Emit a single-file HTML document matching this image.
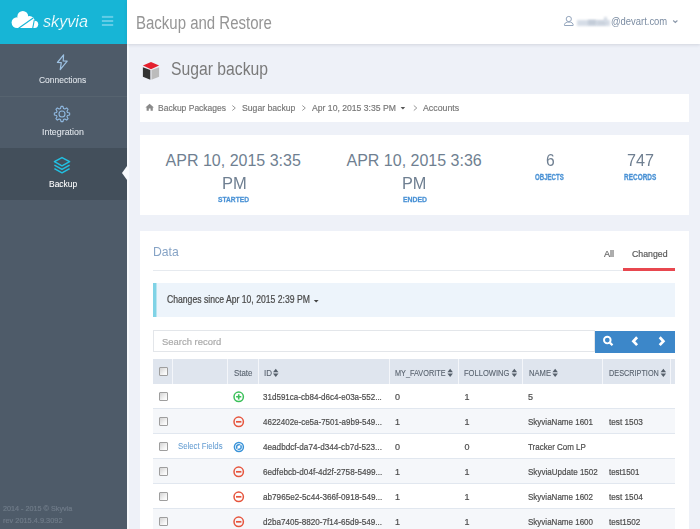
<!DOCTYPE html>
<html><head><meta charset="utf-8">
<style>
*{box-sizing:border-box}
html,body{margin:0;padding:0}
body{width:700px;height:529px;overflow:hidden;position:relative;background:#eef1f8;font-family:"Liberation Sans",sans-serif}
.a{position:absolute}
.t{position:absolute;white-space:nowrap;line-height:1;transform-origin:0 0;font-family:"Liberation Sans",sans-serif}
.s{-webkit-text-stroke:0.2px currentColor}
svg{position:absolute;overflow:visible}
</style></head><body>
<!-- header bar -->
<!-- sidebar -->
<div class=a style="left:0;top:0;width:127px;height:529px;background:#4e5b69"></div>
<div class=a style="left:0;top:0;width:127px;height:44px;background:#17b5d6"></div>
<div class=a style="left:0;top:96px;width:127px;height:1px;background:#56636f"></div>
<div class=a style="left:0;top:148px;width:127px;height:52px;background:#434f5b"></div>
<div class=a style="left:127px;top:44px;width:2px;height:485px;background:#f7f9fc"></div>
<div class=a style="left:127px;top:0;width:573px;height:44px;background:#fff;box-shadow:0 1px 3px rgba(60,70,90,.16)"></div>
<svg style="left:0;top:0" width="130" height="200">
  <polygon points="127,166 122,173 127,180" fill="#f7f9fc"/>
</svg>
<!-- logo -->
<svg style="left:0;top:0" width="127" height="44">
  <g fill="#fff">
    <circle cx="22.8" cy="16.3" r="5.4"/>
    <circle cx="17" cy="22.6" r="5.4"/>
    <circle cx="29.5" cy="21.3" r="5.2"/>
    <circle cx="34.6" cy="24.3" r="3.6"/>
    <rect x="17" y="20" width="17.6" height="8"/>
  </g>
  <g stroke="#17b5d6" stroke-width="1.1" fill="none">
    <line x1="18.6" y1="28.3" x2="33.2" y2="18.0"/>
    <line x1="32.7" y1="28.3" x2="34.3" y2="20.0"/>
  </g>
  <g fill="#62cce6">
    <rect x="101.9" y="15.9" width="11.3" height="2"/>
    <rect x="101.9" y="20" width="11.3" height="2"/>
    <rect x="101.9" y="24" width="11.3" height="2"/>
  </g>
</svg>
<!-- sidebar icons -->
<svg style="left:0;top:0" width="127" height="200">
  <path d="M63.6,54.8 L57.4,62.5 L61.3,62.6 L60.2,69.6 L67.2,61.2 L63.2,61 Z" fill="none" stroke="#9dc1e2" stroke-width="1.2" stroke-linejoin="round"/>
  <g fill="none" stroke="#8fb8e0" stroke-width="1.1">
    <path d="M61.03,106.36 L62.97,106.36 L63.50,108.50 L64.82,109.05 L66.72,107.92 L68.08,109.28 L66.95,111.18 L67.50,112.50 L69.64,113.03 L69.64,114.97 L67.50,115.50 L66.95,116.82 L68.08,118.72 L66.72,120.08 L64.82,118.95 L63.50,119.50 L62.97,121.64 L61.03,121.64 L60.50,119.50 L59.18,118.95 L57.28,120.08 L55.92,118.72 L57.05,116.82 L56.50,115.50 L54.36,114.97 L54.36,113.03 L56.50,112.50 L57.05,111.18 L55.92,109.28 L57.28,107.92 L59.18,109.05 L60.50,108.50 Z" stroke-linejoin="round"/>
    <circle cx="62" cy="114" r="3"/>
  </g>
  <g fill="none" stroke="#22c0e2" stroke-width="1.5" stroke-linejoin="round">
    <path d="M62,157.6 L69.6,161.7 L62,165.8 L54.4,161.7 Z"/>
    <path d="M54.4,165.2 L62,169.4 L69.6,165.2"/>
    <path d="M54.4,168.7 L62,172.8 L69.6,168.7"/>
  </g>
</svg>
<!-- header right -->
<svg style="left:0;top:0" width="700" height="44">
  <g fill="none" stroke="#8ea0b8" stroke-width="0.95">
    <circle cx="568.8" cy="19" r="2.6"/>
    <path d="M564.5,25.5 L564.5,24.3 Q565,22.6 567.2,22.1 L570.4,22.1 Q572.6,22.6 573.1,24.3 L573.1,25.5 Z"/>
    <path d="M673.2,20.5 L675.3,22.5 L677.4,20.5" stroke="#8a98aa" stroke-width="1.1"/>
  </g>
</svg>
<div class=a style="left:576.5px;top:19.5px;width:33px;height:6px;background:#d6dde7;filter:blur(1px)"></div>
<div class=a style="left:588px;top:20px;width:8px;height:5px;background:#c3ccd8;filter:blur(1px)"></div>
<div class=a style="left:597px;top:21px;width:9px;height:4px;background:#cbd3de;filter:blur(1px)"></div>
<div class=a style="left:604px;top:16.5px;width:3px;height:5px;background:#d3dae4;filter:blur(0.8px)"></div>
<!-- title cube -->
<svg style="left:0;top:0" width="200" height="100">
  <polygon points="151,61.9 159.1,65.6 151,69.2 142.9,65.6" fill="#e4202e"/>
  <polygon points="142.9,67.3 150.3,70 150.3,79.8 142.9,76.7" fill="#333"/>
  <polygon points="151.5,70 159.1,67.3 159.1,76.7 151.5,79.8" fill="#bcbcbc"/>
</svg>
<!-- breadcrumb box -->
<div class=a style="left:140px;top:94px;width:549px;height:28px;background:#fff"></div>
<svg style="left:0;top:0" width="700" height="130">
  <path d="M149.6,103.8 L145.4,107.6 L146.6,107.6 L146.6,110.8 L148.8,110.8 L148.8,108.6 L150.6,108.6 L150.6,110.8 L152.8,110.8 L152.8,107.6 L153.9,107.6 Z" fill="#8a8a8a"/>
  <g fill="none" stroke="#9a9a9a" stroke-width="1">
    <path d="M232.3,105.5 L235.3,108 L232.3,110.5"/>
    <path d="M302.3,105.5 L305.3,108 L302.3,110.5"/>
    <path d="M413.8,105.5 L416.8,108 L413.8,110.5"/>
  </g>
  <polygon points="400.6,107 405.2,107 402.9,109.5" fill="#555"/>
</svg>
<!-- stats box -->
<div class=a style="left:140px;top:134.8px;width:549px;height:80.2px;background:#fff"></div>
<!-- data panel -->
<div class=a style="left:140px;top:231.2px;width:548.5px;height:300px;background:#fff"></div>
<div class=a style="left:153px;top:270px;width:470px;height:1px;background:#e6eaef"></div>
<div class=a style="left:623px;top:268px;width:52.4px;height:2.5px;background:#e8474f"></div>
<!-- alert -->
<div class=a style="left:153px;top:283px;width:522.4px;height:34px;background:#edf4fb"></div>
<div class=a style="left:153px;top:283px;width:3px;height:34px;background:#80d3e6"></div>
<div class=a style="left:156px;top:283px;width:1px;height:34px;background:#b9e5f0"></div>
<svg style="left:0;top:0" width="700" height="400">
  <polygon points="313.8,300 318.6,300 316.2,302.6" fill="#444"/>
</svg>
<!-- search -->
<div class=a style="left:153px;top:330.3px;width:442px;height:22.2px;background:#fff;border:1px solid #e3e6ea"></div>
<div class=a style="left:594.6px;top:330.6px;width:80.8px;height:22.1px;background:#3c87c9"></div>
<svg style="left:0;top:0" width="700" height="400">
  <g fill="none" stroke="#fff" stroke-width="1.9">
    <circle cx="607.3" cy="340.1" r="3.3"/>
    <line x1="609.8" y1="342.6" x2="612.5" y2="345.3" stroke-width="2.2"/>
    <path d="M637.1,337.3 L633.4,341.2 L637.1,345.1" stroke-width="2.7"/>
    <path d="M659.7,337.3 L663.4,341.2 L659.7,345.1" stroke-width="2.7"/>
  </g>
</svg>
<!-- table -->
<div class=a style="left:153px;top:359px;width:522.4px;height:25px;background:#dfe5ee"></div>
<div class=a style='left:171.5px;top:359px;width:1.2px;height:25px;background:#f4f6fa'></div>
<div class=a style='left:227.0px;top:359px;width:1.2px;height:25px;background:#f4f6fa'></div>
<div class=a style='left:257.5px;top:359px;width:1.2px;height:25px;background:#f4f6fa'></div>
<div class=a style='left:389.0px;top:359px;width:1.2px;height:25px;background:#f4f6fa'></div>
<div class=a style='left:458.0px;top:359px;width:1.2px;height:25px;background:#f4f6fa'></div>
<div class=a style='left:522.2px;top:359px;width:1.2px;height:25px;background:#f4f6fa'></div>
<div class=a style='left:602.2px;top:359px;width:1.2px;height:25px;background:#f4f6fa'></div>
<div class=a style='left:670.1px;top:359px;width:1.2px;height:25px;background:#f4f6fa'></div>
<svg style='left:0;top:0' width='700' height='529'><polygon points='273,372.3 278.5,372.3 275.75,368.8' fill='#56606b'/><polygon points='273,373.6 278.5,373.6 275.75,377.1' fill='#56606b'/><polygon points='447.4,372.3 452.9,372.3 450.15,368.8' fill='#56606b'/><polygon points='447.4,373.6 452.9,373.6 450.15,377.1' fill='#56606b'/><polygon points='511.6,372.3 517.1,372.3 514.35,368.8' fill='#56606b'/><polygon points='511.6,373.6 517.1,373.6 514.35,377.1' fill='#56606b'/><polygon points='552.4,372.3 557.9,372.3 555.15,368.8' fill='#56606b'/><polygon points='552.4,373.6 557.9,373.6 555.15,377.1' fill='#56606b'/><polygon points='660.6,372.3 666.1,372.3 663.35,368.8' fill='#56606b'/><polygon points='660.6,373.6 666.1,373.6 663.35,377.1' fill='#56606b'/></svg>
<div class=a style='left:153px;top:409.0px;width:522.4px;height:25px;background:#f5f7fa'></div>
<div class=a style='left:153px;top:408.2px;width:522.4px;height:1.3px;background:#e1e7ef'></div>
<div class=a style='left:153px;top:433.2px;width:522.4px;height:1.3px;background:#e1e7ef'></div>
<div class=a style='left:153px;top:459.0px;width:522.4px;height:25px;background:#f5f7fa'></div>
<div class=a style='left:153px;top:458.2px;width:522.4px;height:1.3px;background:#e1e7ef'></div>
<div class=a style='left:153px;top:483.2px;width:522.4px;height:1.3px;background:#e1e7ef'></div>
<div class=a style='left:153px;top:509.0px;width:522.4px;height:25px;background:#f5f7fa'></div>
<div class=a style='left:153px;top:508.2px;width:522.4px;height:1.3px;background:#e1e7ef'></div>
<div class=a style='left:158.9px;top:367.0px;width:9px;height:9px;border:1px solid #9e9e9e;border-radius:1px;background:linear-gradient(135deg,#d3d3d3,#f7f7f7 70%,#fff)'></div>
<div class=a style='left:158.9px;top:391.8px;width:9px;height:9px;border:1px solid #9e9e9e;border-radius:1px;background:linear-gradient(135deg,#d3d3d3,#f7f7f7 70%,#fff)'></div>
<div class=a style='left:158.9px;top:416.8px;width:9px;height:9px;border:1px solid #9e9e9e;border-radius:1px;background:linear-gradient(135deg,#d3d3d3,#f7f7f7 70%,#fff)'></div>
<div class=a style='left:158.9px;top:441.8px;width:9px;height:9px;border:1px solid #9e9e9e;border-radius:1px;background:linear-gradient(135deg,#d3d3d3,#f7f7f7 70%,#fff)'></div>
<div class=a style='left:158.9px;top:466.8px;width:9px;height:9px;border:1px solid #9e9e9e;border-radius:1px;background:linear-gradient(135deg,#d3d3d3,#f7f7f7 70%,#fff)'></div>
<div class=a style='left:158.9px;top:491.8px;width:9px;height:9px;border:1px solid #9e9e9e;border-radius:1px;background:linear-gradient(135deg,#d3d3d3,#f7f7f7 70%,#fff)'></div>
<div class=a style='left:158.9px;top:516.8px;width:9px;height:9px;border:1px solid #9e9e9e;border-radius:1px;background:linear-gradient(135deg,#d3d3d3,#f7f7f7 70%,#fff)'></div>
<svg style='left:0;top:0' width='700' height='529'><circle cx='238.7' cy='396.8' r='4.7' fill='none' stroke='#3cc05a' stroke-width='1.5'/><path d='M236.1,396.8 h5.2 M238.7,394.2 v5.2' stroke='#3cc05a' stroke-width='1.6'/><circle cx='238.7' cy='421.8' r='4.7' fill='none' stroke='#e6543c' stroke-width='1.5'/><path d='M236.0,421.8 h5.4' stroke='#e6543c' stroke-width='1.7'/><circle cx='238.89999999999998' cy='447.0' r='4.5' fill='none' stroke='#3a93d8' stroke-width='1.5'/><circle cx='238.89999999999998' cy='447.0' r='2.3' fill='none' stroke='#3a93d8' stroke-width='1.4'/><line x1='240.6' y1='444.4' x2='237.2' y2='449.6' stroke='#fff' stroke-width='0.9'/><circle cx='238.7' cy='471.8' r='4.7' fill='none' stroke='#e6543c' stroke-width='1.5'/><path d='M236.0,471.8 h5.4' stroke='#e6543c' stroke-width='1.7'/><circle cx='238.7' cy='496.8' r='4.7' fill='none' stroke='#e6543c' stroke-width='1.5'/><path d='M236.0,496.8 h5.4' stroke='#e6543c' stroke-width='1.7'/><circle cx='238.7' cy='521.8' r='4.7' fill='none' stroke='#e6543c' stroke-width='1.5'/><path d='M236.0,521.8 h5.4' stroke='#e6543c' stroke-width='1.7'/></svg>
<div class='t' style='left:136.2px;top:14px;font-size:18px;color:#959595;transform:scale(0.833,1.000);transform-origin:0 15px;'>Backup and Restore</div>
<div class='t' style='left:610.7px;top:16px;font-size:11px;color:#7b8ca2;transform:scale(0.857,1.000);transform-origin:0 9px;'>@devart.com</div>
<div class='t' style='left:171.1px;top:60px;font-size:18px;color:#7a7a7a;transform:scale(0.873,1.000);transform-origin:0 15px;'>Sugar backup</div>
<div class='t s' style='left:157.9px;top:103px;font-size:10px;color:#777;transform:scale(0.850,0.850);transform-origin:0 8px;'>Backup Packages</div>
<div class='t s' style='left:242.0px;top:103px;font-size:10px;color:#777;transform:scale(0.865,0.850);transform-origin:0 8px;'>Sugar backup</div>
<div class='t s' style='left:312.0px;top:103px;font-size:10px;color:#777;transform:scale(0.863,0.850);transform-origin:0 8px;'>Apr 10, 2015 3:35 PM</div>
<div class='t s' style='left:423.4px;top:103px;font-size:10px;color:#777;transform:scale(0.878,0.850);transform-origin:0 8px;'>Accounts</div>
<div class='t' style='left:165.6px;top:153px;font-size:16px;color:#6f7f91;'>APR 10, 2015 3:35</div>
<div class='t' style='left:221.6px;top:176px;font-size:16px;color:#6f7f91;transform:scale(1.032,1.000);transform-origin:0 13px;'>PM</div>
<div class='t' style='left:346.5px;top:153px;font-size:16px;color:#6f7f91;'>APR 10, 2015 3:36</div>
<div class='t' style='left:402.3px;top:176px;font-size:16px;color:#6f7f91;transform:scale(1.018,1.000);transform-origin:0 13px;'>PM</div>
<div class='t' style='left:546.0px;top:153px;font-size:16px;color:#6f7f91;transform:scale(0.978,1.000);transform-origin:0 13px;'>6</div>
<div class='t' style='left:627.0px;top:153px;font-size:16px;color:#6f7f91;transform:scale(1.012,1.000);transform-origin:0 13px;'>747</div>
<div class='t' style='left:218.0px;top:196px;font-size:7.5px;color:#4a92d5;font-weight:700;transform:scale(0.891,1.040);transform-origin:0 6px;-webkit-text-stroke:0.25px currentColor;'>STARTED</div>
<div class='t' style='left:402.6px;top:196px;font-size:7.5px;color:#4a92d5;font-weight:700;transform:scale(0.915,1.040);transform-origin:0 6px;-webkit-text-stroke:0.25px currentColor;'>ENDED</div>
<div class='t' style='left:535.3px;top:174px;font-size:7.5px;color:#4a92d5;font-weight:700;transform:scale(0.814,1.100);transform-origin:0 6px;-webkit-text-stroke:0.25px currentColor;'>OBJECTS</div>
<div class='t' style='left:624.0px;top:174px;font-size:7.5px;color:#4a92d5;font-weight:700;transform:scale(0.861,1.100);transform-origin:0 6px;-webkit-text-stroke:0.25px currentColor;'>RECORDS</div>
<div class='t' style='left:152.8px;top:244px;font-size:14px;color:#87a4c6;transform:scale(0.872,0.940);transform-origin:0 12px;'>Data</div>
<div class='t s' style='left:604.4px;top:249px;font-size:10px;color:#666;transform:scale(0.909,0.875);transform-origin:0 8px;'>All</div>
<div class='t s' style='left:631.6px;top:249px;font-size:10px;color:#555;transform:scale(0.875,0.875);transform-origin:0 8px;'>Changed</div>
<div class='t s' style='left:166.6px;top:296px;font-size:9px;color:#4a4a4a;transform:scale(0.958,1.167);transform-origin:0 7px;'>Changes since Apr 10, 2015 2:39 PM</div>
<div class='t s' style='left:161.9px;top:337px;font-size:10px;color:#aaa;transform:scale(0.944,0.912);transform-origin:0 8px;'>Search record</div>
<div class='t s' style='left:233.6px;top:369px;font-size:9px;color:#59636f;transform:scale(0.876,1.000);transform-origin:0 7px;-webkit-text-stroke:0.12px currentColor;'>State</div>
<div class='t s' style='left:263.6px;top:369px;font-size:9px;color:#59636f;transform:scale(0.889,1.000);transform-origin:0 7px;-webkit-text-stroke:0.12px currentColor;'>ID</div>
<div class='t s' style='left:394.9px;top:369px;font-size:9px;color:#59636f;transform:scale(0.810,1.000);transform-origin:0 7px;-webkit-text-stroke:0.12px currentColor;'>MY_FAVORITE</div>
<div class='t s' style='left:464.4px;top:369px;font-size:9px;color:#59636f;transform:scale(0.839,1.000);transform-origin:0 7px;-webkit-text-stroke:0.12px currentColor;'>FOLLOWING</div>
<div class='t s' style='left:528.5px;top:369px;font-size:9px;color:#59636f;transform:scale(0.846,1.000);transform-origin:0 7px;-webkit-text-stroke:0.12px currentColor;'>NAME</div>
<div class='t s' style='left:608.6px;top:369px;font-size:9px;color:#59636f;transform:scale(0.810,1.000);transform-origin:0 7px;-webkit-text-stroke:0.12px currentColor;'>DESCRIPTION</div>
<div class='t s' style='left:263.4px;top:393px;font-size:9px;color:#4d4d4d;transform:scale(0.893,1.100);transform-origin:0 7px;'>31d591ca-cb84-d6c4-e03a-552...</div>
<div class='t s' style='left:395.0px;top:393px;font-size:9px;color:#4d4d4d;transform:scale(1.000,1.100);transform-origin:0 7px;'>0</div>
<div class='t s' style='left:464.4px;top:393px;font-size:9px;color:#4d4d4d;transform:scale(1.000,1.100);transform-origin:0 7px;'>1</div>
<div class='t s' style='left:528.0px;top:393px;font-size:9px;color:#4d4d4d;transform:scale(1.000,1.100);transform-origin:0 7px;'>5</div>
<div class='t s' style='left:263.4px;top:418px;font-size:9px;color:#4d4d4d;transform:scale(0.887,1.100);transform-origin:0 7px;'>4622402e-ce5a-7501-a9b9-549...</div>
<div class='t s' style='left:395.0px;top:418px;font-size:9px;color:#4d4d4d;transform:scale(1.000,1.100);transform-origin:0 7px;'>1</div>
<div class='t s' style='left:464.4px;top:418px;font-size:9px;color:#4d4d4d;transform:scale(1.000,1.100);transform-origin:0 7px;'>1</div>
<div class='t s' style='left:528.0px;top:418px;font-size:9px;color:#4d4d4d;transform:scale(0.890,1.100);transform-origin:0 7px;'>SkyviaName 1601</div>
<div class='t s' style='left:608.5px;top:418px;font-size:9px;color:#4d4d4d;transform:scale(0.914,1.100);transform-origin:0 7px;'>test 1503</div>
<div class='t s' style='left:263.4px;top:443px;font-size:9px;color:#4d4d4d;transform:scale(0.907,1.100);transform-origin:0 7px;'>4eadbdcf-da74-d344-cb7d-523...</div>
<div class='t s' style='left:395.0px;top:443px;font-size:9px;color:#4d4d4d;transform:scale(1.000,1.100);transform-origin:0 7px;'>0</div>
<div class='t s' style='left:464.4px;top:443px;font-size:9px;color:#4d4d4d;transform:scale(1.000,1.100);transform-origin:0 7px;'>0</div>
<div class='t s' style='left:528.0px;top:443px;font-size:9px;color:#4d4d4d;transform:scale(0.888,1.100);transform-origin:0 7px;'>Tracker Com LP</div>
<div class='t s' style='left:263.4px;top:468px;font-size:9px;color:#4d4d4d;transform:scale(0.907,1.100);transform-origin:0 7px;'>6edfebcb-d04f-4d2f-2758-5499...</div>
<div class='t s' style='left:395.0px;top:468px;font-size:9px;color:#4d4d4d;transform:scale(1.000,1.100);transform-origin:0 7px;'>1</div>
<div class='t s' style='left:464.4px;top:468px;font-size:9px;color:#4d4d4d;transform:scale(1.000,1.100);transform-origin:0 7px;'>1</div>
<div class='t s' style='left:528.0px;top:468px;font-size:9px;color:#4d4d4d;transform:scale(0.894,1.100);transform-origin:0 7px;'>SkyviaUpdate 1502</div>
<div class='t s' style='left:608.5px;top:468px;font-size:9px;color:#4d4d4d;transform:scale(0.880,1.100);transform-origin:0 7px;'>test1501</div>
<div class='t s' style='left:263.4px;top:493px;font-size:9px;color:#4d4d4d;transform:scale(0.907,1.100);transform-origin:0 7px;'>ab7965e2-5c44-366f-0918-549...</div>
<div class='t s' style='left:395.0px;top:493px;font-size:9px;color:#4d4d4d;transform:scale(1.000,1.100);transform-origin:0 7px;'>1</div>
<div class='t s' style='left:464.4px;top:493px;font-size:9px;color:#4d4d4d;transform:scale(1.000,1.100);transform-origin:0 7px;'>1</div>
<div class='t s' style='left:528.0px;top:493px;font-size:9px;color:#4d4d4d;transform:scale(0.890,1.100);transform-origin:0 7px;'>SkyviaName 1602</div>
<div class='t s' style='left:608.5px;top:493px;font-size:9px;color:#4d4d4d;transform:scale(0.914,1.100);transform-origin:0 7px;'>test 1504</div>
<div class='t s' style='left:263.4px;top:518px;font-size:9px;color:#4d4d4d;transform:scale(0.900,1.100);transform-origin:0 7px;'>d2ba7405-8820-7f14-65d9-549...</div>
<div class='t s' style='left:395.0px;top:518px;font-size:9px;color:#4d4d4d;transform:scale(1.000,1.100);transform-origin:0 7px;'>1</div>
<div class='t s' style='left:464.4px;top:518px;font-size:9px;color:#4d4d4d;transform:scale(1.000,1.100);transform-origin:0 7px;'>1</div>
<div class='t s' style='left:528.0px;top:518px;font-size:9px;color:#4d4d4d;transform:scale(0.890,1.100);transform-origin:0 7px;'>SkyviaName 1600</div>
<div class='t s' style='left:608.5px;top:518px;font-size:9px;color:#4d4d4d;transform:scale(0.906,1.100);transform-origin:0 7px;'>test1502</div>
<div class='t s' style='left:178.2px;top:442px;font-size:9px;color:#659dd2;transform:scale(0.865,1.100);transform-origin:0 7px;-webkit-text-stroke:0.05px currentColor;'>Select Fields</div>
<div class='t' style='left:43.0px;top:14px;font-size:16px;color:#ffffff;transform:scale(1.011,1.000);transform-origin:0 13px;font-style:italic;-webkit-text-stroke:0.2px #17b5d6;'>skyvia</div>
<div class='t s' style='left:39.2px;top:75px;font-size:10px;color:#dfe4ea;transform:scale(0.848,0.900);transform-origin:0 8px;-webkit-text-stroke:0.08px currentColor;'>Connections</div>
<div class='t s' style='left:42.4px;top:127px;font-size:10px;color:#dfe4ea;transform:scale(0.887,0.925);transform-origin:0 8px;-webkit-text-stroke:0.08px currentColor;'>Integration</div>
<div class='t s' style='left:49.1px;top:179px;font-size:10px;color:#ffffff;transform:scale(0.845,0.912);transform-origin:0 8px;-webkit-text-stroke:0.08px currentColor;'>Backup</div>
<div class='t s' style='left:2.8px;top:505px;font-size:7px;color:#6f7b88;transform:scale(1.033,1.000);transform-origin:0 6px;'>2014 - 2015 © Skyvia</div>
<div class='t s' style='left:2.8px;top:517px;font-size:7px;color:#6f7b88;transform:scale(1.054,1.000);transform-origin:0 6px;'>rev 2015.4.9.3092</div>
</body></html>
